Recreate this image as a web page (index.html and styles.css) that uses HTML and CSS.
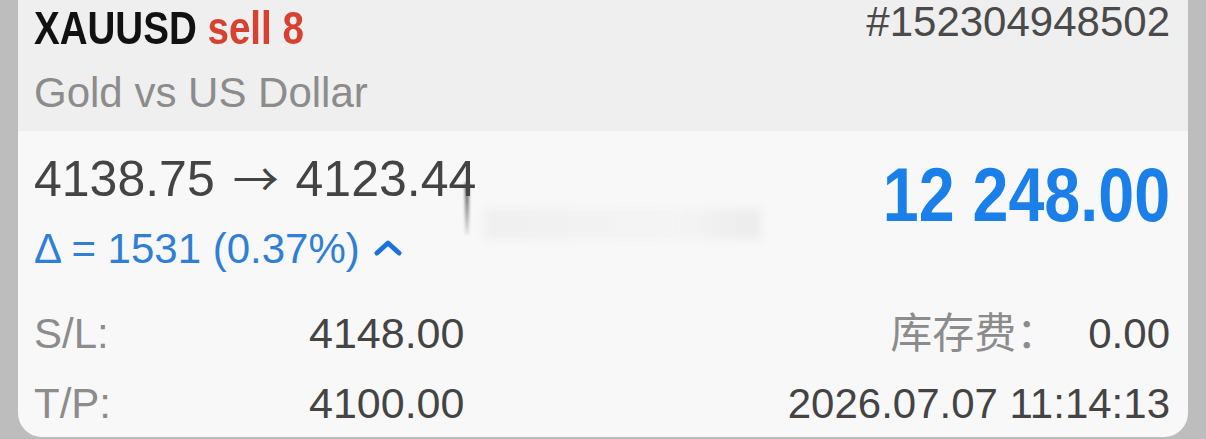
FILE: index.html
```html
<!DOCTYPE html>
<html lang="zh-CN">
<head>
    <meta charset="UTF-8">
    <meta name="viewport" content="width=device-width, initial-scale=1.0">
    <title>XAUUSD sell 8</title>
    <link rel="stylesheet" href="styles.css">
</head>
<body>
    <div class="card">
        <header class="card-head">
            <div class="head-row">
                <h1 class="symbol">XAUUSD <span class="side">sell 8</span></h1>
                <span class="ticket">#152304948502</span>
            </div>
            <div class="desc">Gold vs US Dollar</div>
        </header>

        <section class="card-body">
            <div class="price-row">
                <div>
                    <div class="prices">4138.75 <span class="arrow">→</span> 4123.44</div>
                    <div class="delta">
                        Δ = 1531 (0.37%)
                        <svg class="chevron" width="28" height="18" viewBox="0 0 28 18">
                            <polyline points="3,15 14,5 25,15" fill="none" stroke="#1d72d9" stroke-width="5" stroke-linecap="round" stroke-linejoin="round"/>
                        </svg>
                    </div>
                </div>
                <div class="profit">12 248.00</div>
            </div>

            <!-- smeared bit left over from the screen -->
            <div class="smudge"></div>
            <div class="streak"></div>

            <div class="detail-row first">
                <span class="label">S/L:</span>
                <span class="value">4148.00</span>
                <span class="right">
                    <span class="label cjk">库存费：</span>
                    <span class="value swap">0.00</span>
                </span>
            </div>
            <div class="detail-row">
                <span class="label">T/P:</span>
                <span class="value">4100.00</span>
                <span class="right">
                    <span class="value">2026.07.07 11:14:13</span>
                </span>
            </div>
        </section>
    </div>
</body>
</html>
```

FILE: styles.css
```css
* {
    margin: 0;
    padding: 0;
    box-sizing: border-box;
}

body {
    font-family: "Liberation Sans", Arial, sans-serif;
    background-color: #bdbdbd;
    width: 1206px;
    height: 439px;
    overflow: hidden;
}

.card {
    margin: 0 18px;
    height: 437px;
    background-color: #f8f8f8;
    border-radius: 0 0 24px 24px;
    overflow: hidden;
}

.card-head {
    height: 131px;
    background-color: #efefef;
    padding: 1px 18px 0 16px;
}

.head-row {
    display: flex;
    justify-content: space-between;
    align-items: flex-start;
}

/* narrow bold face: squeeze the regular bold */
.symbol {
    margin-top: 3px;
    font-weight: bold;
    font-size: 47px;
    line-height: 1;
    color: #111;
    transform: scaleX(0.82);
    transform-origin: left center;
    white-space: nowrap;
}

.side {
    color: #d8402f;
}

.ticket {
    font-size: 42px;
    line-height: 1;
    color: #4a4a4a;
}

.desc {
    margin-top: 21px;
    font-size: 42px;
    line-height: 1;
    color: #8c8c8c;
}

.card-body {
    position: relative;
    padding: 22px 18px 0 16px;
}

.price-row {
    display: flex;
    justify-content: space-between;
    align-items: flex-start;
}

.prices {
    font-size: 50px;
    line-height: 1;
    color: #444;
    white-space: nowrap;
}

.arrow {
    font-family: "Noto Sans CJK SC", sans-serif;
    font-size: 46px;
    margin: 0 3px 0 4px;
}

.delta {
    margin-top: 24px;
    font-size: 42px;
    line-height: 1;
    color: #2f7fd6;
    display: flex;
    align-items: center;
    gap: 14px;
}

.chevron {
    margin-top: -4px;
}

.profit {
    margin-top: 4px;
    font-weight: bold;
    font-size: 76px;
    line-height: 1;
    color: #1a7fe8;
    transform: scaleX(0.85);
    transform-origin: right center;
    white-space: nowrap;
}

.smudge {
    position: absolute;
    left: 466px;
    top: 78px;
    width: 276px;
    height: 30px;
    background: linear-gradient(90deg, rgba(220, 220, 220, 0.3), rgba(235, 235, 235, 0.3) 70%, rgba(220, 220, 220, 0.45));
    filter: blur(5px);
}

.streak {
    position: absolute;
    left: 447px;
    top: 52px;
    width: 4px;
    height: 52px;
    background: linear-gradient(180deg, #444, rgba(150, 150, 150, 0.15));
    filter: blur(1.5px);
}

.detail-row {
    display: flex;
    align-items: baseline;
    margin-top: 27px;
    font-size: 42px;
    line-height: 1;
}

.detail-row.first {
    margin-top: 42px;
}

.detail-row .label {
    color: #8c8c8c;
}

.detail-row > .label {
    width: 275px;
}

.detail-row > .value {
    font-size: 43px;
}

.value {
    color: #444;
}

.right {
    margin-left: auto;
    display: flex;
    align-items: baseline;
}

.cjk {
    font-family: "Liberation Sans", "Noto Sans CJK SC", sans-serif;
}

.swap {
    margin-left: 30px;
}
```
